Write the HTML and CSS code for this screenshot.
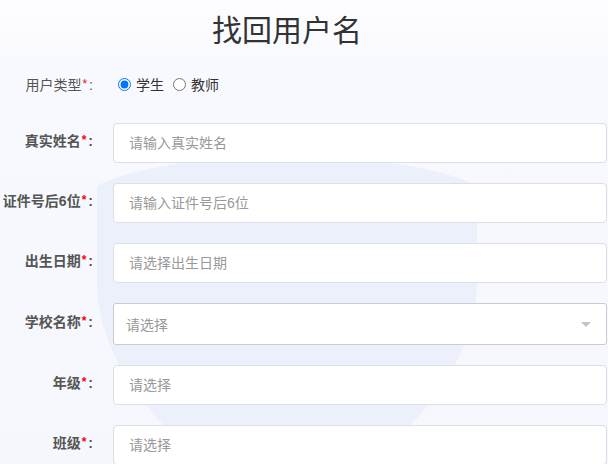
FILE: index.html
```html
<!DOCTYPE html>
<html>
    <head>
        <meta charset="utf-8" />
        <title>找回用户名</title>
        <link rel="stylesheet" href="styles.css">
    </head>
    <body>
        <svg class="shield" width="608" height="464" viewBox="0 0 608 464" aria-hidden="true">
            <path d="M97,186 C130,168 200,157 287,157 C374,157 444,168 477,186 L477,290 C470,380 400,450 287,520 C174,450 104,380 97,290 Z" fill="#ecf0fa"/>
        </svg>
        <h1 class="title">找回用户名</h1>
        <form class="form" id="form">
            <div class="row row-radio">
                <span class="label label-plain">用户类型<span class="req">*</span>:</span>
                <div class="radios">
                    <label class="radio"><input type="radio" name="type" checked><span>学生</span></label>
                    <label class="radio"><input type="radio" name="type"><span>教师</span></label>
                </div>
            </div>
            <div class="row">
                <label class="label" for="name">真实姓名<span class="req">*</span>:</label>
                <input class="field" type="text" id="name" placeholder="请输入真实姓名">
            </div>
            <div class="row">
                <label class="label" for="idno">证件号后6位<span class="req">*</span>:</label>
                <input class="field" type="text" id="idno" placeholder="请输入证件号后6位">
            </div>
            <div class="row">
                <label class="label" for="birth">出生日期<span class="req">*</span>:</label>
                <input class="field" type="text" id="birth" placeholder="请选择出生日期">
            </div>
            <div class="row">
                <span class="label">学校名称<span class="req">*</span>:</span>
                <div class="field select"><span>请选择</span></div>
            </div>
            <div class="row">
                <label class="label" for="grade">年级<span class="req">*</span>:</label>
                <input class="field" type="text" id="grade" placeholder="请选择" readonly>
            </div>
            <div class="row">
                <label class="label" for="klass">班级<span class="req">*</span>:</label>
                <input class="field" type="text" id="klass" placeholder="请选择" readonly>
            </div>
        </form>
    </body>
</html>
```

FILE: styles.css
```css
body {
    margin: 0;
    min-height: 464px;
    position: relative;
    overflow: hidden;
    background: linear-gradient(#fdfdff 0, #f8f9fe 70px, #f5f7fd 100%);
    font-family: "Liberation Sans", "Noto Sans CJK SC", sans-serif;
}

.shield {
    position: absolute;
    top: 0;
    left: 0;
}

.title {
    position: relative;
    width: 574px;
    margin: 0;
    padding-top: 8px;
    line-height: 40px;
    font-size: 30px;
    font-weight: normal;
    text-align: center;
    color: #333;
    font-family: "Noto Sans CJK SC", sans-serif;
}

.form {
    position: relative;
    padding: 17px 1px 0 0;
}

.row {
    display: flex;
    align-items: center;
    gap: 20px;
    margin-bottom: 20px;
}

.row-radio {
    height: 38px;
}

.label {
    flex: none;
    width: 93px;
    padding-bottom: 6px;
    text-align: right;
    font-size: 14px;
    font-weight: bold;
    color: #555;
}

.label-plain {
    font-weight: normal;
    padding-bottom: 1px;
}

.req {
    position: relative;
    top: -2px;
    margin: 0 2px 0 1px;
    font-size: 12px;
    color: #f00;
}

.radios {
    display: flex;
    align-items: center;
    font-size: 14px;
    color: #333;
}

.radio {
    display: flex;
    align-items: center;
    margin-right: 4px;
}

.radio input {
    width: 13px;
    height: 13px;
    margin: 0 3px 0 5px;
}

.radio span {
    margin-left: 2px;
}

.field {
    flex: 1;
    min-width: 0;
    height: 40px;
    box-sizing: border-box;
    padding: 0 15px;
    border: 1px solid #dcdfe6;
    border-radius: 4px;
    background: #fff;
    font-family: inherit;
    font-size: 14px;
    color: #333;
    outline: none;
}

.field::placeholder {
    color: #999;
}

.select {
    display: flex;
    align-items: center;
    justify-content: space-between;
    height: 42px;
    padding: 0 15px 0 12px;
    border-color: #c8cbd1;
    border-radius: 3px;
    color: #999;
}

.select:after {
    content: "";
    border-left: 5px solid transparent;
    border-right: 5px solid transparent;
    border-top: 5px solid #c0c4cc;
}
```
